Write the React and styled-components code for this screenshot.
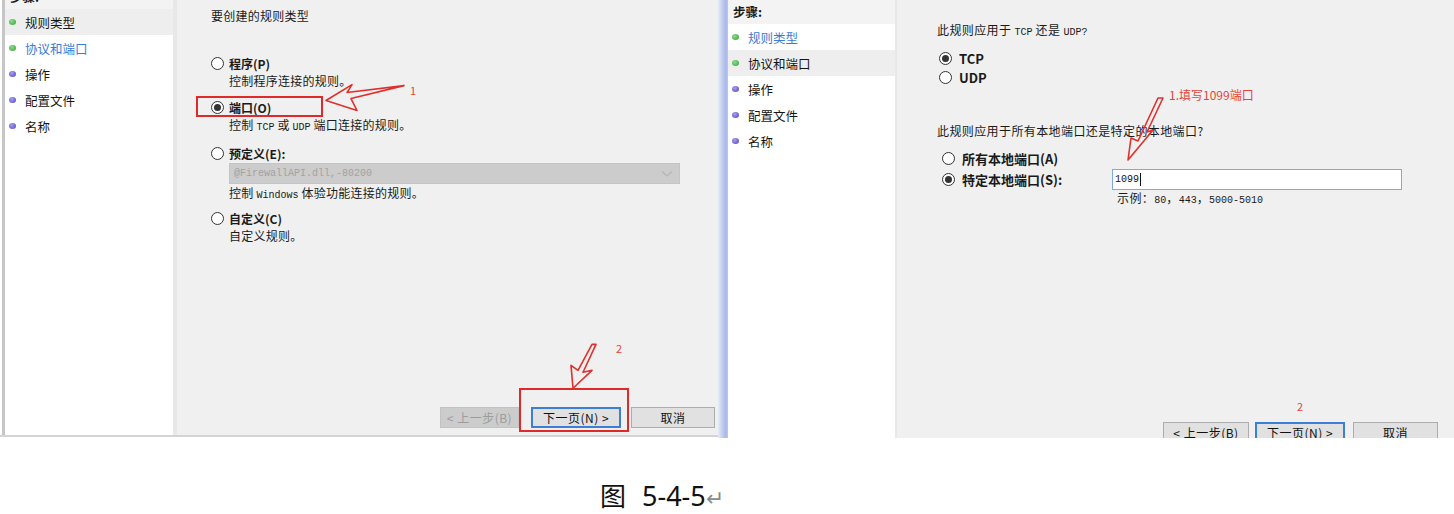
import React from 'react';
import styled, { createGlobalStyle } from 'styled-components';

const Global = createGlobalStyle`
  html, body { margin: 0; padding: 0; background: #fff; }
  body {
    font-family: "Noto Sans CJK SC", "Noto Sans", sans-serif;
    color: #1a1a1a;
    width: 1454px;
    height: 514px;
    overflow: hidden;
  }
`;

const Page = styled.div`
  width: 1454px;
  height: 514px;
  display: flex;
  flex-direction: column;
`;

const Shots = styled.div`
  display: flex;
  height: 438px;
  flex: none;
`;

const Win = styled.div`
  position: relative;
  display: flex;
  flex: none;
  width: ${p => p.$w}px;
  height: ${p => p.$h}px;
  overflow: hidden;
  box-sizing: border-box;
`;

const LeftWin = styled(Win)`
  padding-left: 2px;
  border-bottom: 2px solid #d4d4d4;
  &::before {
    content: '';
    width: 3px;
    flex: none;
    background: #c6c6c6;
  }
`;

const BlueEdge = styled.div`
  width: 10px;
  flex: none;
  background: linear-gradient(to right, #e9ecf6 0%, #c9d3f1 35%, #a9b9ec 75%, #b9c7f0 100%);
`;

const Sidebar = styled.div`
  width: ${p => p.$w}px;
  flex: none;
  background: #fff;
  display: flex;
  flex-direction: column;
  border-right: ${p => p.$edge}px solid #e8e8e8;
`;

const StepsHead = styled.div`
  height: 24px;
  line-height: 24px;
  flex: none;
  padding-left: 5px;
  margin-top: ${p => p.$offset}px;
  font-size: 12.5px;
  font-weight: 700;
  background: #f3f3f3;
`;

const Step = styled.div`
  height: 26px;
  flex: none;
  display: flex;
  align-items: center;
  gap: 9px;
  padding-left: 4px;
  font-size: 12.5px;
  background: ${p => (p.$active ? '#eeeeee' : 'transparent')};
  color: ${p => (p.$link ? '#3b7ad6' : '#141414')};
`;

const Dot = styled.span`
  width: 7px;
  height: 6px;
  border-radius: 50%;
  flex: none;
  background: ${p =>
    p.$done
      ? 'radial-gradient(circle at 40% 35%, #8fdc8f, #2f9f2f)'
      : 'radial-gradient(circle at 40% 35%, #a79ff0, #4d40c0)'};
`;

const Content = styled.div`
  flex: 1;
  background: #f0f0f0;
  display: flex;
  flex-direction: column;
  padding-left: ${p => p.$pad}px;
  font-size: 12px;
  letter-spacing: ${p => p.$ls}px;
  min-width: 0;
`;

const Line = styled.div`
  line-height: ${p => p.$lh || 18}px;
  height: ${p => p.$lh || 18}px;
  margin-top: ${p => p.$mt || 0}px;
  padding-left: ${p => p.$indent || 0}px;
  white-space: nowrap;
  flex: none;
`;

const Mono = styled.span`
  font-family: "Liberation Mono", monospace;
  font-size: 10px;
  letter-spacing: 0;
`;

const OptionRow = styled.div`
  display: flex;
  align-items: center;
  gap: ${p => p.$gap}px;
  height: ${p => p.$h || 18}px;
  margin-top: ${p => p.$mt || 0}px;
  padding-left: ${p => p.$indent || 0}px;
  flex: none;
  white-space: nowrap;
`;

const Radio = styled.span`
  width: 13px;
  height: 13px;
  box-sizing: border-box;
  border-radius: 50%;
  border: 1px solid #333;
  background: #fff;
  flex: none;
  display: inline-flex;
  align-items: center;
  justify-content: center;
  &::after {
    content: '';
    width: 7px;
    height: 7px;
    border-radius: 50%;
    background: ${p => (p.$checked ? '#333' : 'transparent')};
  }
`;

const BoldLabel = styled.span`
  font-weight: 700;
  font-size: ${p => p.$size || 12}px;
  letter-spacing: 0;
  width: ${p => (p.$w ? `${p.$w}px` : 'auto')};
  flex: none;
`;

const DisabledSelect = styled.div`
  margin-left: 18px;
  margin-top: 1px;
  width: 451px;
  height: 21px;
  box-sizing: border-box;
  flex: none;
  background: #cccccc;
  border: 1px solid #c4c4c4;
  display: flex;
  align-items: center;
  justify-content: space-between;
  padding: 0 6px 0 4px;
  color: #a2a2a2;
`;

const Chevron = styled.svg`
  width: 12px;
  height: 8px;
  flex: none;
`;

const PortInput = styled.div`
  width: 290px;
  height: 21px;
  box-sizing: border-box;
  background: #fff;
  border: 1px solid #7ea9e2;
  display: flex;
  align-items: center;
  padding-left: 2px;
  color: #111;
`;

const Caret = styled.span`
  width: 1px;
  height: 13px;
  background: #111;
  margin-left: 1px;
`;

const Footer = styled.div`
  margin-top: auto;
  display: flex;
  justify-content: flex-end;
  align-items: center;
  padding-right: ${p => p.$pr}px;
  margin-bottom: ${p => p.$mb}px;
  flex: none;
`;

const Btn = styled.div`
  height: 21px;
  width: ${p => p.$w}px;
  margin-left: ${p => p.$ml || 0}px;
  box-sizing: border-box;
  flex: none;
  display: flex;
  align-items: center;
  justify-content: center;
  font-size: 12px;
  letter-spacing: 0.5px;
  background: ${p => (p.$disabled ? '#cccccc' : '#e1e1e1')};
  color: ${p => (p.$disabled ? '#9c9c9c' : '#111')};
  border: ${p => (p.$primary ? '2px solid #3d7fd4' : p.$disabled ? '1px solid #c2c2c2' : '1px solid #adadad')};
`;

const RedBox = styled.div`
  position: absolute;
  left: ${p => p.$x}px;
  top: ${p => p.$y}px;
  width: ${p => p.$w}px;
  height: ${p => p.$h}px;
  box-sizing: border-box;
  border: 2px solid #e02a2a;
  pointer-events: none;
`;

const Note = styled.div`
  position: absolute;
  left: ${p => p.$x}px;
  top: ${p => p.$y}px;
  color: #e5443c;
  font-size: ${p => p.$size || 11}px;
  line-height: 14px;
  white-space: nowrap;
  font-family: "Noto Sans CJK SC", "Noto Sans", sans-serif;
`;

const Overlay = styled.svg`
  position: absolute;
  left: 0;
  top: 0;
  width: 100%;
  height: 100%;
  pointer-events: none;
  overflow: visible;
`;

const Caption = styled.div`
  margin-top: 40px;
  padding-left: 600px;
  display: flex;
  align-items: baseline;
  height: 34px;
  line-height: 34px;
  flex: none;
`;

const CapFig = styled.span`
  font-family: "Noto Sans CJK SC", sans-serif;
  font-size: 26px;
  color: #111;
`;

const CapNum = styled.span`
  font-family: "Noto Sans", sans-serif;
  font-size: 27px;
  margin-left: 16px;
  color: #111;
`;

const CapMark = styled.span`
  font-family: "DejaVu Sans", sans-serif;
  font-size: 22px;
  color: #8a8a8a;
`;

const steps = [
  { name: '规则类型', done: true },
  { name: '协议和端口', done: true },
  { name: '操作', done: false },
  { name: '配置文件', done: false },
  { name: '名称', done: false },
];

function StepList({ w, edge, offset, active, link }) {
  return (
    <Sidebar $w={w} $edge={edge}>
      <StepsHead $offset={offset}>步骤:</StepsHead>
      {steps.map((s, i) => (
        <Step key={s.name} $active={i === active} $link={i === link}>
          <Dot $done={s.done} />
          {s.name}
        </Step>
      ))}
    </Sidebar>
  );
}

function LeftShot() {
  return (
    <LeftWin $w={718} $h={437}>
      <StepList w={168} edge={4} offset={-15} active={0} link={1} />
      <Content $pad={34} $ls={0.25}>
        <Line $mt={7}>要创建的规则类型</Line>

        <OptionRow $gap={5} $mt={29}>
          <Radio />
          <BoldLabel>程序(P)</BoldLabel>
        </OptionRow>
        <Line $indent={18}>控制程序连接的规则。</Line>

        <OptionRow $gap={5} $mt={8}>
          <Radio $checked />
          <BoldLabel>端口(O)</BoldLabel>
        </OptionRow>
        <Line $indent={18}>
          控制 <Mono>TCP</Mono> 或 <Mono>UDP</Mono> 端口连接的规则。
        </Line>

        <OptionRow $gap={5} $mt={10}>
          <Radio />
          <BoldLabel>预定义(E):</BoldLabel>
        </OptionRow>
        <DisabledSelect>
          <Mono>@FirewallAPI.dll,-80200</Mono>
          <Chevron viewBox="0 0 12 8">
            <path d="M1 1.5 L6 6 L11 1.5" fill="none" stroke="#b4b4b4" strokeWidth="1.2" />
          </Chevron>
        </DisabledSelect>
        <Line $indent={18}>
          控制 <Mono>Windows</Mono> 体验功能连接的规则。
        </Line>

        <OptionRow $gap={5} $mt={7}>
          <Radio />
          <BoldLabel>自定义(C)</BoldLabel>
        </OptionRow>
        <Line $indent={18}>自定义规则。</Line>

        <Footer $pr={3} $mb={7}>
          <Btn $w={79} $disabled>&lt; 上一步(B)</Btn>
          <Btn $w={90} $ml={12} $primary>下一页(N) &gt;</Btn>
          <Btn $w={84} $ml={10}>取消</Btn>
        </Footer>
      </Content>

      <RedBox $x={196} $y={96} $w={127} $h={21} />
      <RedBox $x={519} $y={388} $w={110} $h={44} />
      <Note $x={410} $y={83}>1</Note>
      <Note $x={616} $y={341}>2</Note>
      <Overlay viewBox="0 0 718 437" preserveAspectRatio="none">
        <g fill="none" stroke="#e0302c" strokeWidth="1.6" strokeLinejoin="round">
          <path d="M326 101 L352 85 L347 93 L404 86 L351 99 L357 111 Z" />
          <path d="M596 346 L583 374 L592 372 L573 390 L571 367 L578 372 L592 346 Z" />
        </g>
      </Overlay>
    </LeftWin>
  );
}

function RightShot() {
  return (
    <Win $w={736} $h={438}>
      <BlueEdge />
      <StepList w={167} edge={2} offset={0} active={1} link={0} />
      <Content $pad={40} $ls={0.4}>
        <Line $mt={21}>
          此规则应用于 <Mono>TCP</Mono> 还是 <Mono>UDP?</Mono>
        </Line>
        <OptionRow $gap={7} $h={19} $mt={10} $indent={2}>
          <Radio $checked />
          <BoldLabel $size={13}>TCP</BoldLabel>
        </OptionRow>
        <OptionRow $gap={7} $h={19} $indent={2}>
          <Radio />
          <BoldLabel $size={13}>UDP</BoldLabel>
        </OptionRow>

        <Line $mt={35}>此规则应用于所有本地端口还是特定的本地端口?</Line>
        <OptionRow $gap={7} $h={19} $mt={9} $indent={5}>
          <Radio />
          <BoldLabel $size={13}>所有本地端口(A)</BoldLabel>
        </OptionRow>
        <OptionRow $gap={7} $h={21} $mt={1} $indent={5}>
          <Radio $checked />
          <BoldLabel $size={13} $w={143}>特定本地端口(S):</BoldLabel>
          <PortInput>
            <Mono>1099</Mono>
            <Caret />
          </PortInput>
        </OptionRow>
        <Line $lh={16} $indent={180}>
          示例：<Mono>80</Mono>，<Mono>443</Mono>，<Mono>5000-5010</Mono>
        </Line>

        <Footer $pr={16} $mb={-5}>
          <Btn $w={86}>&lt; 上一步(B)</Btn>
          <Btn $w={90} $ml={6} $primary>下一页(N) &gt;</Btn>
          <Btn $w={85} $ml={8}>取消</Btn>
        </Footer>
      </Content>

      <Note $x={451} $y={88} $size={12}>1.填写1099端口</Note>
      <Note $x={579} $y={399}>2</Note>
      <Overlay viewBox="0 0 736 438" preserveAspectRatio="none">
        <g fill="none" stroke="#e0302c" strokeWidth="1.6" strokeLinejoin="round">
          <path d="M445 98 L429 132 L435 130 L410 160 L413 138 L420 141 L440 98 Z" />
        </g>
      </Overlay>
    </Win>
  );
}

export default function App() {
  return (
    <Page>
      <Global />
      <Shots>
        <LeftShot />
        <RightShot />
      </Shots>
      <Caption>
        <CapFig>图</CapFig>
        <CapNum>5-4-5</CapNum>
        <CapMark>↵</CapMark>
      </Caption>
    </Page>
  );
}
